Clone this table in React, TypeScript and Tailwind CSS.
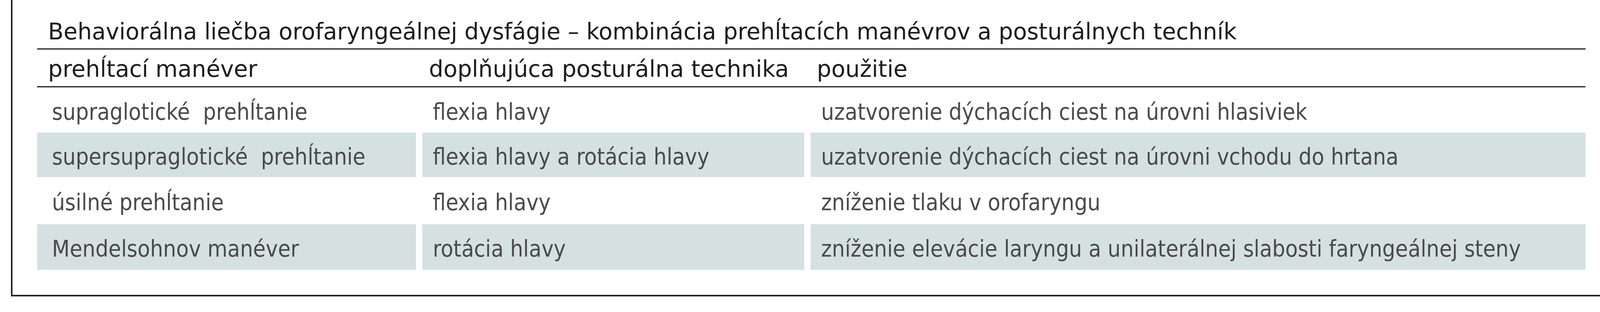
import React from 'react';

const rows = [
  { a: 'supraglotické  prehĺtanie', b: 'flexia hlavy', c: 'uzatvorenie dýchacích ciest na úrovni hlasiviek', shade: false, h: 'h-[116px]' },
  { a: 'supersupraglotické  prehĺtanie', b: 'flexia hlavy a rotácia hlavy', c: 'uzatvorenie dýchacích ciest na úrovni vchodu do hrtana', shade: true, h: 'h-[114px]' },
  { a: 'úsilné prehĺtanie', b: 'flexia hlavy', c: 'zníženie tlaku v orofaryngu', shade: false, h: 'h-[121px]' },
  { a: 'Mendelsohnov manéver', b: 'rotácia hlavy', c: 'zníženie elevácie laryngu a unilaterálnej slabosti faryngeálnej steny', shade: true, h: 'h-[117px]' },
];

export default function App() {
  return (
    <div className="w-full h-[800px] bg-white overflow-hidden" style={{ fontFamily: '"DejaVu Sans", "Open Sans", sans-serif' }}>
      <div className="ml-[28px] w-[4107px] h-[760px] border-x-4 border-b-4 border-[#222222] pl-[63px] pr-[72px]">
        {/* Title */}
        <div className="h-[127px] border-b-[3px] border-[#222222] flex items-end pb-[14px] pl-[28px] text-[58px] leading-none text-[#1c1c1c] whitespace-nowrap">
          Behaviorálna liečba orofaryngeálnej dysfágie – kombinácia prehĺtacích manévrov a posturálnych techník
        </div>

        {/* Header */}
        <div className="grid grid-cols-[970px_978px_1984px] gap-x-[16px] h-[97px] border-b-[3px] border-[#222222] text-[58.5px] leading-none text-[#1c1c1c] whitespace-nowrap">
          <div className="flex items-end pb-[15px] pl-[28px]">prehĺtací manéver</div>
          <div className="flex items-end pb-[15px] pl-[17px]">doplňujúca posturálna technika</div>
          <div className="flex items-end pb-[15px] pl-[16px]">použitie</div>
        </div>

        {/* Rows */}
        {rows.map((r, i) => (
          <div
            key={i}
            className={`grid grid-cols-[970px_978px_1984px] gap-x-[16px] ${r.h} text-[58.5px] leading-none text-[#4a4a4a] whitespace-pre`}
            style={{ fontFamily: '"DejaVu Sans Condensed", "DejaVu Sans", sans-serif' }}
          >
            <div className={`flex items-center pt-[10px] pl-[38px] ${r.shade ? 'bg-[#d5e1e1]' : ''}`}>{r.a}</div>
            <div className={`flex items-center pt-[10px] pl-[27px] ${r.shade ? 'bg-[#d5e1e1]' : ''}`}>{r.b}</div>
            <div className={`flex items-center pt-[10px] pl-[27px] ${r.shade ? 'bg-[#d5e1e1]' : ''}`}>{r.c}</div>
          </div>
        ))}
      </div>
    </div>
  );
}
